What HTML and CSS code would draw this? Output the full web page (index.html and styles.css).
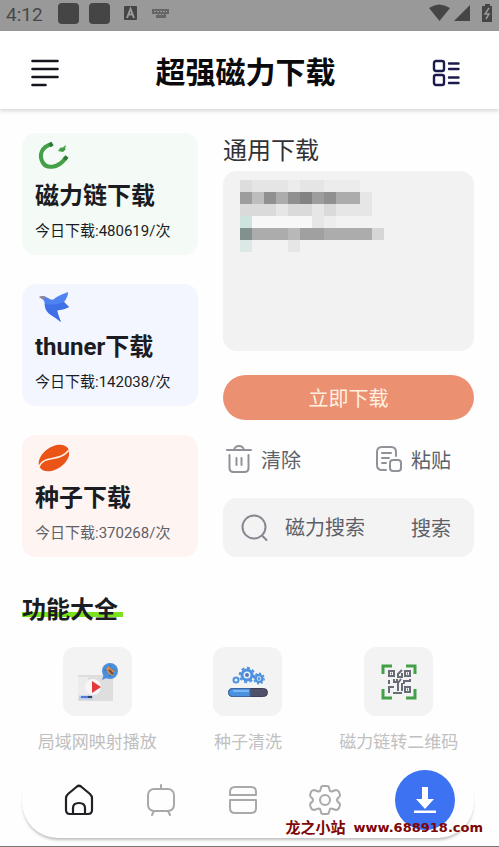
FILE: index.html
```html
<!DOCTYPE html>
<html lang="zh-CN">
<head>
<meta charset="utf-8">
<meta name="viewport" content="width=device-width, initial-scale=1">
<title>超强磁力下载</title>
<link rel="stylesheet" href="styles.css">
</head>
<body>
<div class="status">
  <span class="clock">4:12</span>
  <svg width="114" height="22" viewBox="0 0 114 22" fill="#454545">
    <rect x="0" y="0" width="21" height="21" rx="4"/>
    <rect x="31" y="0" width="21" height="21" rx="4"/>
    <rect x="66" y="3" width="13" height="14" rx="1"/>
    <path d="M69 15l3.500-9 3.500 9M70.500 11.500h4" fill="none" stroke="#999" stroke-width="2"/>
    <path d="M94 6h17v5h-3v4h-10v-4h-4z" fill="#666"/>
    <path d="M96 8.500h13M98 11.500h9" stroke="#999" stroke-width="1" stroke-dasharray="2 1"/>
  </svg>
  <svg class="signals" width="64" height="20" viewBox="0 0 64 20" fill="#454545">
    <path d="M0 4Q10-3 21 4L10.500 17z"/>
    <path d="M41 1v16H25z"/>
    <path d="M56 0h5v2h2v16h-10V2h3z"/>
    <path d="M60 4l-4 6h4l-3 5" fill="none" stroke="#999" stroke-width="1.500"/>
  </svg>
</div>

<header class="header">
  <button class="icon-btn" aria-label="菜单">
    <svg width="28" height="28" viewBox="0 0 28 28" fill="none" stroke="#15171f" stroke-width="2.600" stroke-linecap="round">
      <path d="M1.500 2h25M1.500 10h25M1.500 18h25M1.500 26h13"/>
    </svg>
  </button>
  <h1>超强磁力下载</h1>
  <button class="icon-btn" aria-label="列表">
    <svg width="28" height="28" viewBox="0 0 28 28" fill="none" stroke="#1b1c4b" stroke-width="2.400" stroke-linecap="round">
      <rect x="2" y="2" width="10" height="10" rx="2"/>
      <rect x="2" y="16" width="10" height="10" rx="2"/>
      <path d="M17 4.500h9.500M17 10h9.500M17 18.500h9.500M17 24h9.500"/>
    </svg>
  </button>
</header>

<main>
  <div class="top">
    <div class="cards">
      <a class="card green" href="#">
        <svg width="34" height="34" viewBox="0 0 34 34" fill="none">
          <path d="M17 5C6 8 4 16 7.500 23S23 30 31 18.500" stroke="#43a047" stroke-width="4"/>
          <path d="M14.500 6.500l3-2M29.500 20.500l2.500-3" stroke="#2c7a36" stroke-width="4"/>
          <path d="M23 12l3-4 1 1 4-3-1 4h1l-3 3z" fill="#43a047"/>
        </svg>
        <h2>磁力链下载</h2>
        <p>今日下载:480619/次</p>
      </a>
      <a class="card blue" href="#">
        <svg width="34" height="34" viewBox="0 0 34 34">
          <path d="M4 7Q9 5 13 8Q17 11 19 9Q22 6 33 2Q33 7 29 12L34 17Q29 20 22 20.500Q23 25 26 32Q21 28 16 25Q9 21 9.500 12Q8 8 4 7z" fill="#5083f2"/>
          <path d="M10 14Q18 16 29 12L34 17Q29 20 22 20.500Q23 25 26 32Q21 28 16 25Q10 21 10 14z" fill="#3f70e8"/>
          <path d="M4 7Q8 5 11 7L8.500 10z" fill="#8c8796"/>
        </svg>
        <h2>thuner下载</h2>
        <p>今日下载:142038/次</p>
      </a>
      <a class="card red" href="#">
        <svg width="34" height="34" viewBox="0 0 34 34">
          <ellipse cx="19" cy="17" rx="17" ry="11" fill="#eb5417" transform="rotate(-35 19 17)"/>
          <path d="M4 26C9 13 24 22 34 9" fill="none" stroke="#fff1ec" stroke-width="1.500"/>
        </svg>
        <h2>种子下载</h2>
        <p class="muted">今日下载:370268/次</p>
      </a>
    </div>

    <section class="panel">
      <label class="panel-title" for="links">通用下载</label>
      <div class="links">
        <textarea id="links"></textarea>
        <svg class="mosaic" width="144" height="72" viewBox="0 0 144 72" shape-rendering="crispEdges" aria-hidden="true">
          <path fill="#dddddd" d="M0 0h12v12H0z"/>
          <path fill="#e5e5e5" d="M12 0h36v12H12zM60 0h24v12H60z"/>
          <path fill="#ececec" d="M48 0h12v12H48zM84 0h36v12H84z"/>
          <path fill="#9d9d9d" d="M0 12h12v12H0zM72 12h12v12H72z"/>
          <path fill="#bdbdbd" d="M12 12h12v12H12z"/>
          <path fill="#909090" d="M24 12h12v12H24zM48 12h12v12H48zM84 12h12v12H84z"/>
          <path fill="#828282" d="M60 12h12v12H60z"/>
          <path fill="#acacac" d="M36 12h12v12H36zM96 12h24v12H96z"/>
          <path fill="#e6e6e6" d="M120 12h12v12h-12zM36 24h12v12H36zM72 24h12v12H72zM96 24h36v12H96zM72 36h12v12H72zM48 60h12v12H48z"/>
          <path fill="#dadada" d="M0 24h36v12H0zM48 24h24v12H48zM84 24h12v12H84z"/>
          <path fill="#f7f7f7" d="M12 36h60v12H12z"/>
          <path fill="#ededed" d="M84 36h12v12H84z"/>
          <path fill="#acacac" d="M12 48h36v12H12zM84 48h48v12H84z"/>
          <path fill="#b8b8b8" d="M48 48h12v12H48z"/>
          <path fill="#a0a0a0" d="M60 48h24v12H60z"/>
          <path fill="#d6d6d6" d="M132 48h12v12h-12z"/>
          <path fill="#cfe3de" d="M0 36h12v12H0z"/>
          <path fill="#80918e" d="M0 48h12v12H0z"/>
          <path fill="#dce8e5" d="M0 60h12v12H0z"/>
        </svg>
      </div>
      <button class="primary">立即下载</button>
      <div class="actions">
        <button>
          <svg width="28" height="30" viewBox="0 0 28 30" fill="none" stroke="#8f9399" stroke-width="2" stroke-linecap="round">
            <path d="M2 6h24M9 6q1-4 5-4t5 4M4.500 11v13q0 4 4 4h11q4 0 4-4V11M11.500 14v7M16.500 14v7"/>
          </svg>清除
        </button>
        <button>
          <svg width="28" height="28" viewBox="0 0 28 28" fill="none" stroke="#8f9399" stroke-width="2" stroke-linecap="round">
            <path d="M11 25H7q-5 0-5-5V7q0-5 5-5h9q5 0 5 5v4M7 8h9M7 13h7M7 18h4"/>
            <rect x="15" y="15" width="11" height="11" rx="3"/>
          </svg>粘贴
        </button>
      </div>
      <form class="search">
        <svg width="28" height="28" viewBox="0 0 28 28" fill="none" stroke="#85898f" stroke-width="2" stroke-linecap="round">
          <circle cx="13" cy="13" r="11.500"/><path d="M21.500 22l4 4"/>
        </svg>
        <input type="text" aria-label="磁力搜索" placeholder="磁力搜索">
        <button type="button">搜索</button>
      </form>
    </section>
  </div>

  <h2 class="section-title"><span>功能大全</span></h2>
  <div class="features">
    <a href="#">
      <span class="tile">
        <svg width="42" height="42" viewBox="0 0 42 42">
          <rect x="2" y="14" width="35" height="26" fill="#dedede"/>
          <path d="M2 16h10v22H2z" fill="#ececec"/>
          <circle cx="17" cy="26" r="8" fill="#f6f6f6"/>
          <path d="M16 20l9 6-9 6z" fill="#e5383b"/>
          <path d="M3 36.500h14" stroke="#b8cdf0" stroke-width="4"/>
          <path d="M5 36h7" stroke="#4b7dd8" stroke-width="2"/><path d="M12 36h4" stroke="#3b4056" stroke-width="2"/>
          <path d="M28 13l-2 6 7-3z" fill="#4a8fdb"/><circle cx="34" cy="10" r="8" fill="#4a8fdb"/>
          <path d="M34 4v12M28 9h11" stroke="#3570b8"/>
          <path d="M30 8l3-3 2 3 4 2-2 2 1 3-5-2z" fill="#e28a3c"/><path d="M33 9l4 4" stroke="#6b4b4b" stroke-width="2"/>
        </svg>
      </span>局域网映射播放
    </a>
    <a href="#">
      <span class="tile">
        <svg width="42" height="42" viewBox="0 0 42 42" fill="none">
          <g stroke="#4f91df">
            <circle cx="20" cy="14" r="5" stroke-width="3" fill="#e5f1ff"/>
            <circle cx="20" cy="14" r="7.200" stroke-width="2" stroke-dasharray="3 2.600"/>
            <circle cx="32" cy="17.500" r="3.500" stroke-width="2.500" fill="#e5f1ff"/>
            <circle cx="32" cy="17.500" r="5.200" stroke-width="1.500" stroke-dasharray="2 2"/>
            <circle cx="9" cy="19" r="2.500" stroke-width="2"/>
          </g>
          <circle cx="20" cy="14" r="2" fill="#5a78b0"/><circle cx="32" cy="17.500" r="1.500" fill="#5a9be0"/>
          <rect x="1.500" y="27.500" width="39" height="8" rx="4" fill="#50506a" stroke="#3e3e58"/>
          <path d="M23 27.500H5.500q-4 0-4 4t4 4H23z" fill="#4b91dd" stroke="#3c66a4"/>
          <path d="M6 30h16" stroke="#7bb8f4" stroke-width="2"/>
        </svg>
      </span>种子清洗
    </a>
    <a href="#">
      <span class="tile">
        <svg width="42" height="42" viewBox="0 0 42 42" fill="none" stroke="#686c76" stroke-width="2">
          <path d="M5 13V5h9M28 5h9v8M37 28v9h-9M14 37H5v-9" stroke="#43a047" stroke-width="3"/>
          <rect x="11" y="10" width="5" height="5"/><rect x="27" y="10" width="5" height="5"/><rect x="27" y="26" width="5" height="5"/>
          <path d="M13 12.500h1M29 12.500h1M29 28.500h1M24 9l-4 4v3h4v-4M11 19v4M16 18v3h3v-3M23 18l-3 4v8M26 23v-3h6v-2M11 32v-6h5M15 32h9M24 22v8"/>
        </svg>
      </span>磁力链转二维码
    </a>
  </div>
</main>

<footer>
  <nav class="tabs">
    <a href="#" aria-label="首页">
      <svg width="32" height="32" viewBox="0 0 32 32" fill="none" stroke="#202124" stroke-width="2.200" stroke-linejoin="round">
        <path d="M14 2.500q2-1.500 4 0l9 7.500q2 2 2 4v12q0 4-4 4H7q-4 0-4-4V14q0-2 2-4zM10 30v-6q0-5 6-5t6 5v6"/>
      </svg>
    </a>
    <a href="#" aria-label="影视">
      <svg width="32" height="34" viewBox="0 0 32 34" fill="none" stroke="#a9a9a9" stroke-width="2" stroke-linecap="round">
        <rect x="3" y="6" width="26" height="22" rx="6"/><path d="M16 2v4M9 28l-2 4M23 28l2 4"/>
      </svg>
    </a>
    <a href="#" aria-label="分类">
      <svg width="32" height="32" viewBox="0 0 32 32" fill="none" stroke="#a9a9a9" stroke-width="2" stroke-linejoin="round">
        <path d="M3 11V8q0-5 5-5h16q5 0 5 5v3zM3 16h26v8q0 5-5 5H8q-5 0-5-5z"/>
      </svg>
    </a>
    <a href="#" aria-label="设置">
      <svg width="34" height="34" viewBox="0 0 34 34" fill="none" stroke="#a9a9a9" stroke-width="2" stroke-linejoin="round">
        <path d="M15 3h4q2 0 2 2l1 3q1 1 3 0l3-1q2 0 3 2l1 3q0 2-2 3-2 2 0 4 2 1 2 3l-1 3q-1 2-3 2l-3-1q-2-1-3 0l-1 3q0 2-2 2h-4q-2 0-2-2l-1-3q-1-1-3 0l-3 1q-2 0-3-2l-1-3q0-2 2-3 2-2 0-4-2-1-2-3l1-3q1-2 3-2l3 1q2 1 3 0l1-3q0-2 2-2z"/>
        <circle cx="17" cy="17" r="5"/>
      </svg>
    </a>
    <button class="download" aria-label="下载">
      <svg width="26" height="28" viewBox="0 0 26 28" fill="#fff">
        <path d="M10 1h6v12h6l-9 10-9-10h6z"/><path d="M2 24.500h22v2.500H2z"/>
      </svg>
    </button>
  </nav>
  <p class="site"><span>龙之小站</span><span class="url">www.688918.com</span></p>
</footer>
</body>
</html>
```
FILE: styles.css
```css
* { box-sizing: border-box; }

body {
  margin: 0;
  background: #fefefe;
  color: #1a1c22;
  font-family: Roboto, "Noto Sans CJK SC", sans-serif;
}

h1, h2, p { margin: 0; }
a { color: inherit; text-decoration: none; }
svg { display: block; flex: none; }

button {
  padding: 0;
  border: 0;
  background: none;
  color: inherit;
  font: inherit;
}

.status {
  display: flex;
  align-items: center;
  gap: 15px;
  height: 31px;
  padding: 0 6px 3px;
  background: #999;
  color: #484848;
  font-size: 19px;
}

.signals { margin-left: auto; }

.header {
  display: flex;
  align-items: center;
  justify-content: space-between;
  height: 78px;
  padding: 5px 39px 0 31px;
  background: #fff;
  box-shadow: 0 2px 4px rgba(0, 0, 0, 0.16);
}

.header h1 {
  color: #0b0b0d;
  font-size: 30px;
  font-weight: 700;
  line-height: 40px;
}

main { padding: 24px 25px 0 22px; }

.top {
  display: grid;
  grid-template-columns: 176fr 251fr;
  gap: 25px;
}

.cards {
  display: flex;
  flex-direction: column;
  gap: 29px;
}

.card {
  height: 122px;
  padding: 6px 13px;
  border-radius: 14px;
}

.green { background: #f4faf5; }
.blue { background: #f3f6fe; }
.red { background: #fef4f2; }

.card h2 {
  margin-top: 6px;
  font-size: 24px;
  font-weight: 700;
  line-height: 34px;
}

.card p {
  margin-top: 6px;
  font-size: 15px;
  line-height: 24px;
}

.card .muted { color: #606066; }

.panel {
  display: flex;
  flex-direction: column;
}

.panel-title {
  height: 38px;
  color: #303236;
  font-size: 24px;
  line-height: 36px;
}

.links { position: relative; }

.links textarea {
  display: block;
  width: 100%;
  height: 180px;
  padding: 16px;
  border: 0;
  border-radius: 14px;
  background: #f2f2f2;
  font: inherit;
  resize: none;
}

.mosaic {
  position: absolute;
  top: 9px;
  left: 17px;
}

.primary {
  height: 45px;
  margin-top: 24px;
  border-radius: 23px;
  background: #ec9072;
  color: #fff1e2;
  font-size: 20px;
}

.actions {
  display: flex;
  justify-content: space-between;
  height: 78px;
  padding: 0 23px 0 2px;
  color: #5c626a;
  font-size: 20px;
}

.actions button {
  display: flex;
  align-items: center;
  gap: 8px;
}

.search {
  display: flex;
  align-items: center;
  gap: 16px;
  height: 59px;
  padding: 0 23px 0 18px;
  border-radius: 14px;
  background: #f3f3f4;
  color: #5c6068;
  font-size: 20px;
}

.search input {
  flex: 1;
  width: 0;
  padding: 0;
  border: 0;
  background: none;
  color: inherit;
  font: inherit;
}

.search input::placeholder {
  color: inherit;
  opacity: 1;
}

.section-title {
  margin-top: 36px;
  font-size: 24px;
  font-weight: 700;
  line-height: 34px;
}

.section-title span {
  display: inline-block;
  padding-right: 5px;
  background: linear-gradient(#7be21c, #7be21c) 0 19px / 100% 5px no-repeat;
}

.features {
  display: grid;
  grid-template-columns: repeat(3, 1fr);
  margin-top: 20px;
}

.features a {
  display: flex;
  flex-direction: column;
  align-items: center;
  gap: 13px;
  color: #c0c0c0;
  font-size: 17px;
  line-height: 26px;
  white-space: nowrap;
}

.tile {
  display: grid;
  place-items: center;
  width: 69px;
  height: 69px;
  border-radius: 12px;
  background: #f3f3f4;
}

footer {
  position: relative;
  padding: 10px 25px 8px 22px;
  border-bottom: 1px solid #777;
}

.tabs {
  display: grid;
  grid-template-columns: repeat(4, 1fr) auto;
  align-items: center;
  height: 73px;
  padding: 0 19px 3px 16px;
  border-radius: 36px;
  background: #fefefe;
  box-shadow: 0 3px 3px -1px rgba(0, 0, 0, 0.25);
}

.tabs a {
  display: grid;
  place-items: center;
}

.download {
  display: grid;
  place-items: center;
  width: 60px;
  height: 60px;
  margin-left: 29px;
  border-radius: 50%;
  background: #3d73f2;
}

.site {
  position: absolute;
  right: 16px;
  bottom: 8px;
  display: flex;
  gap: 8px;
  color: #7d0505;
  font-size: 15px;
  font-weight: 700;
  line-height: 20px;
}

.url {
  font-family: "DejaVu Sans", sans-serif;
  font-size: 13px;
}
```
